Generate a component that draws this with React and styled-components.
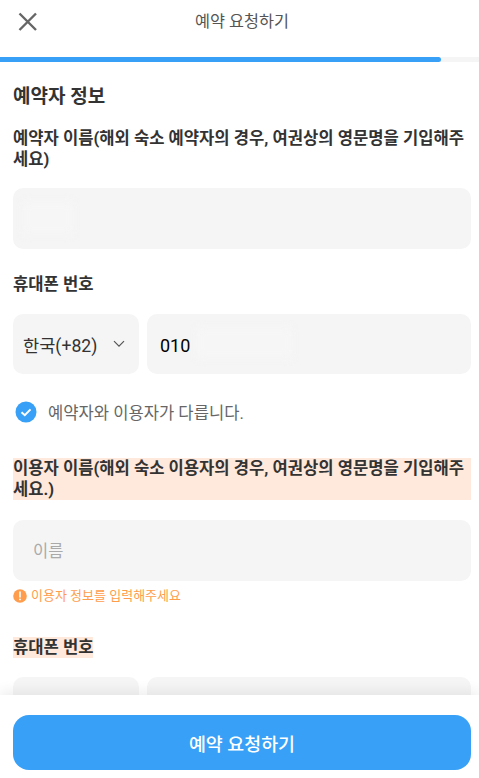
import React from "react";
import styled, { createGlobalStyle } from "styled-components";

const Global = createGlobalStyle`
  html, body { margin: 0; padding: 0; background: #fff; height: 100%; overflow: hidden; }
  * { box-sizing: border-box; }
  body { font-family: Roboto, "Noto Sans CJK KR", "Noto Sans", sans-serif; color: #333; }
`;

const Page = styled.div`
  position: relative;
  width: 479px;
  height: 778px;
  overflow: hidden;
  background: #fff;
`;

const Header = styled.header`
  position: relative;
  height: 57px;
  display: flex;
  justify-content: center;
  padding: 10px 0 0 5px;
`;

const CloseButton = styled.button`
  position: absolute;
  left: 16px;
  top: 10px;
  width: 24px;
  height: 24px;
  padding: 0;
  border: 0;
  background: none;
  color: #666;
  display: flex;
`;

const HeaderTitle = styled.h1`
  margin: 0;
  font-size: 16.3px;
  line-height: 24px;
  font-weight: 400;
  color: #555;
`;

const Track = styled.div`
  height: 5px;
  background: #f5f5f5;
`;

const Fill = styled.div`
  height: 100%;
  background: #38a1f7;
  border-radius: 0 3px 3px 0;
`;

const Content = styled.main`
  padding: 22px 8px 0 13px;
`;

const SectionTitle = styled.h2`
  margin: 0 0 18px;
  font-size: 19px;
  line-height: 26px;
  font-weight: 700;
  color: #333;
`;

const Label = styled.div`
  font-size: 16.6px;
  line-height: 21px;
  font-weight: 700;
  color: #333;
  width: ${(p) => (p.$fit ? "fit-content" : "auto")};
  background: ${(p) => (p.$warn ? "#ffe9dc" : "transparent")};
`;

const Field = styled.div`
  position: relative;
  height: 61px;
  border-radius: 10px;
  background: #f5f5f5;
  display: flex;
  align-items: center;
  padding: 0 ${(p) => (p.$wide ? 20 : 13)}px 2px;
  font-size: 16.5px;
  color: ${(p) => (p.$placeholder ? "#aaa" : "#000")};
  flex: ${(p) => (p.$grow ? 1 : "none")};
`;

const FieldGroup = styled.div`
  margin-top: ${(p) => p.$top}px;
`;

const PhoneRow = styled.div`
  margin-top: 19px;
  display: flex;
  gap: 8px;
  height: 60px;
`;

const CountrySelect = styled.div`
  width: 126px;
  border-radius: 10px;
  background: #f5f5f5;
  display: flex;
  align-items: center;
  justify-content: space-between;
  padding: 0 14px 0 10px;
  font-size: 17.6px;
  color: #333;
`;

const PhoneInput = styled(Field)`
  height: 60px;
  font-size: 18px;
  padding: 2px 13px 0;
`;

const Smudge = styled.span`
  position: absolute;
  left: ${(p) => p.$left}px;
  top: ${(p) => p.$top}px;
  width: ${(p) => p.$w}px;
  height: ${(p) => p.$h}px;
  background: #f6f6f6;
  filter: blur(5px);
`;

const CheckRow = styled.div`
  margin-top: 28px;
  display: flex;
  align-items: center;
  gap: 11px;
  padding-left: 2px;
  font-size: 16.6px;
  line-height: 24px;
  color: #666;
`;

const CheckMark = styled.svg`
  margin-top: -4px;
`;

const ErrorRow = styled.div`
  margin-top: 6px;
  display: flex;
  align-items: center;
  gap: 4px;
  font-size: 13px;
  line-height: 18px;
  color: #ff9d4d;
`;

const Footer = styled.footer`
  position: absolute;
  left: 0;
  right: 0;
  bottom: 0;
  height: 83px;
  padding: 20px 8px 0 13px;
  background: #fff;
  box-shadow: 0 -4px 12px rgba(0, 0, 0, 0.07);
`;

const Submit = styled.button`
  width: 100%;
  height: 55px;
  border: 0;
  border-radius: 16px;
  background: #38a1f7;
  color: #fff;
  font-family: inherit;
  font-size: 18.4px;
  font-weight: 500;
`;

const Close = () => (
  <svg width="24" height="24" viewBox="0 0 24 24" fill="none" stroke="currentColor" strokeWidth="2.4">
    <path d="M3.5 3.5 20 20M20 3.5 3.5 20" />
  </svg>
);

const Chevron = () => (
  <svg width="12" height="8" viewBox="0 0 12 8" fill="none" stroke="#555" strokeWidth="1.2">
    <path d="M1 1.2 6 6.2l5-5" />
  </svg>
);

const Check = () => (
  <CheckMark width="22" height="22" viewBox="0 0 22 22">
    <circle cx="11" cy="11" r="10.5" fill="#38a1f7" />
    <path d="M6.5 11.2 9.8 14.2 15.5 8.4" fill="none" stroke="#fff" strokeWidth="2" />
  </CheckMark>
);

const Alert = () => (
  <svg width="14" height="14" viewBox="0 0 14 14">
    <circle cx="7" cy="7" r="6.8" fill="#ff9d4d" />
    <path d="M7 3v5" stroke="#fff" strokeWidth="1.6" strokeLinecap="round" />
    <circle cx="7" cy="10.4" r="0.95" fill="#fff" />
  </svg>
);

export default function App() {
  return (
    <Page>
      <Global />
      <Header>
        <CloseButton aria-label="닫기"><Close /></CloseButton>
        <HeaderTitle>예약 요청하기</HeaderTitle>
      </Header>
      <Track><Fill style={{ width: `${(441 / 479) * 100}%` }} /></Track>
      <Content>
        <SectionTitle>예약자 정보</SectionTitle>
        <Label>예약자 이름(해외 숙소 예약자의 경우, 여권상의 영문명을 기입해주세요)</Label>
        <FieldGroup $top={18}><Field><Smudge $left={10} $top={14} $w={50} $h={32} /></Field></FieldGroup>
        <FieldGroup $top={25}><Label>휴대폰 번호</Label></FieldGroup>
        <PhoneRow>
          <CountrySelect>한국(+82)<Chevron /></CountrySelect>
          <PhoneInput $grow>010<Smudge $left={50} $top={14} $w={95} $h={30} /></PhoneInput>
        </PhoneRow>
        <CheckRow><Check />예약자와 이용자가 다릅니다.</CheckRow>
        <FieldGroup $top={32}>
          <Label $warn>이용자 이름(해외 숙소 이용자의 경우, 여권상의 영문명을 기입해주세요.)</Label>
        </FieldGroup>
        <FieldGroup $top={20}><Field $wide $placeholder>이름</Field></FieldGroup>
        <ErrorRow><Alert />이용자 정보를 입력해주세요</ErrorRow>
        <FieldGroup $top={32}><Label $warn $fit>휴대폰 번호</Label></FieldGroup>
        <PhoneRow>
          <CountrySelect />
          <PhoneInput $grow />
        </PhoneRow>
      </Content>
      <Footer><Submit>예약 요청하기</Submit></Footer>
    </Page>
  );
}
